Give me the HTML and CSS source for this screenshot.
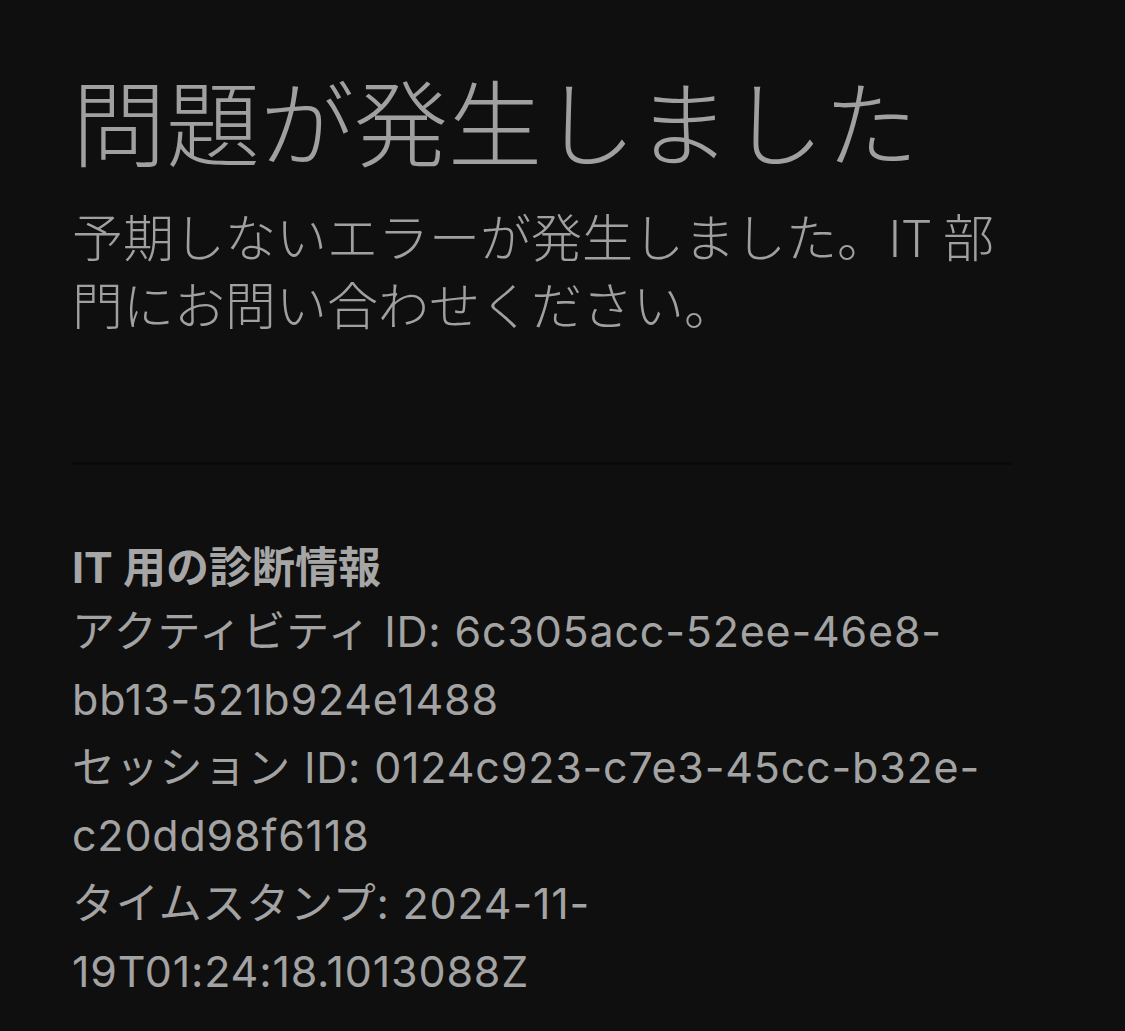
FILE: index.html
```html
<!DOCTYPE html>
<html lang="ja">
<head>
<meta charset="utf-8">
<title>問題が発生しました</title>
<link rel="stylesheet" href="styles.css">
</head>
<body>
<main class="page">
  <h1 class="title">問題が発生しました</h1>
  <p class="subtitle">予期しないエラーが発生しました。IT 部門にお問い合わせください。</p>
  <hr class="divider">
  <section class="diag">
    <h2 class="diag-heading">IT 用の診断情報</h2>
    <p class="diag-line">アクティビティ ID: 6c305acc-52ee-46e8-bb13-521b924e1488</p>
    <p class="diag-line">セッション ID: 0124c923-c7e3-45cc-b32e-c20dd98f6118</p>
    <p class="diag-line">タイムスタンプ: 2024-11-19T01:24:18.1013088Z</p>
  </section>
</main>
</body>
</html>
```
FILE: styles.css
```css
html, body {
  margin: 0;
  padding: 0;
  background: #0f0f0f;
}

body {
  font-family: Inter, "Noto Sans CJK JP", sans-serif;
  color: #a3a3a3;
  height: 1031px;
  overflow: hidden;
}

.page {
  padding: 70px 113px 0 72px;
}

.title {
  margin: 0;
  font-size: 94px;
  font-weight: 300;
  line-height: 112px;
  color: #a0a0a0;
}

.subtitle {
  margin: 19px 0 0;
  font-family: "Noto Sans CJK JP", sans-serif;
  font-size: 51px;
  font-weight: 300;
  line-height: 68px;
  color: #a0a0a0;
}

.divider {
  margin: 125px 0 0;
  border: 0;
  height: 3px;
  background: #0a0a0a;
}

.diag {
  margin-top: 72px;
}

.diag-heading {
  margin: 0;
  font-size: 43px;
  font-weight: 700;
  line-height: 60px;
  color: #a6a6a6;
}

.diag-line {
  margin: 0;
  font-size: 43px;
  font-weight: 400;
  line-height: 68px;
  letter-spacing: 0.8px;
  color: #a3a3a3;
}
```
